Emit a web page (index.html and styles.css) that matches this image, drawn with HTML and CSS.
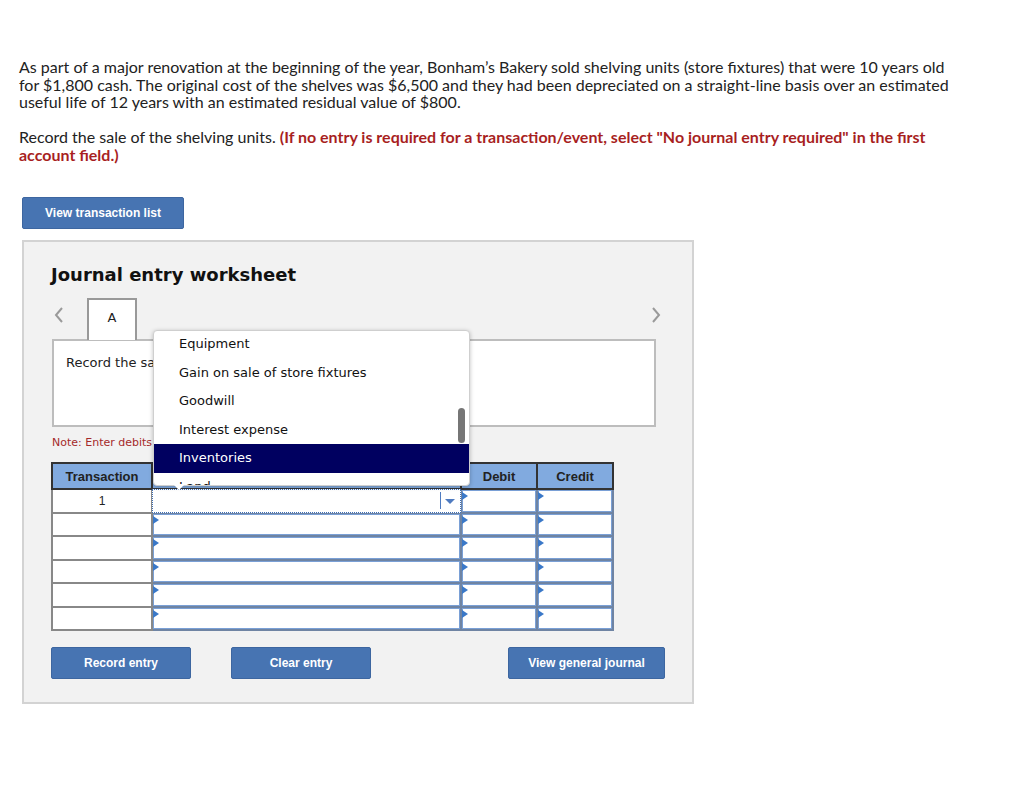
FILE: index.html
```html
<!DOCTYPE html>
<html lang="en">
<head>
    <meta charset="UTF-8">
    <title>Journal entry worksheet</title>
    <link rel="stylesheet" href="styles.css">
</head>
<body>
    <div class="pregunta">
        <p>As part of a major renovation at the beginning of the year, Bonham’s Bakery sold shelving units (store fixtures) that were 10 years old for $1,800 cash. The original cost of the shelves was $6,500 and they had been depreciated on a straight-line basis over an estimated useful life of 12 years with an estimated residual value of $800.</p>
        <p>Record the sale of the shelving units. <b class="aviso">(If no entry is required for a transaction/event, select "No journal entry required" in the first account field.)</b></p>
    </div>
    <button class="boton boton-lista">View transaction list</button>

    <div class="hoja">
        <h2 class="hoja-titulo">Journal entry worksheet</h2>
        <div class="tabs">
            <svg class="flecha" width="10" height="16" viewBox="0 0 10 16"><polyline points="8,1 2,8 8,15" fill="none" stroke="#9a9a9a" stroke-width="2"/></svg>
            <div class="tab">A</div>
            <svg class="flecha flecha-der" width="10" height="16" viewBox="0 0 10 16"><polyline points="2,1 8,8 2,15" fill="none" stroke="#9a9a9a" stroke-width="2"/></svg>
        </div>
        <div class="descripcion">Record the sale of the shelving units.</div>
        <div class="nota">Note: Enter debits before credits.</div>

        <table class="diario">
            <colgroup>
                <col class="col-trans">
                <col class="col-cuenta">
                <col class="col-monto">
                <col class="col-monto">
            </colgroup>
            <thead>
                <tr>
                    <th>Transaction</th>
                    <th>General Journal</th>
                    <th>Debit</th>
                    <th>Credit</th>
                </tr>
            </thead>
            <tbody>
                <tr>
                    <td class="trans">1</td>
                    <td class="celda"><div class="campo activo"><span class="sep"></span><span class="abajo"></span></div></td>
                    <td class="celda"><div class="campo"></div></td>
                    <td class="celda"><div class="campo"></div></td>
                </tr>
                <tr>
                    <td class="trans"></td>
                    <td class="celda"><div class="campo"></div></td>
                    <td class="celda"><div class="campo"></div></td>
                    <td class="celda"><div class="campo"></div></td>
                </tr>
                <tr>
                    <td class="trans"></td>
                    <td class="celda"><div class="campo"></div></td>
                    <td class="celda"><div class="campo"></div></td>
                    <td class="celda"><div class="campo"></div></td>
                </tr>
                <tr>
                    <td class="trans"></td>
                    <td class="celda"><div class="campo"></div></td>
                    <td class="celda"><div class="campo"></div></td>
                    <td class="celda"><div class="campo"></div></td>
                </tr>
                <tr>
                    <td class="trans"></td>
                    <td class="celda"><div class="campo"></div></td>
                    <td class="celda"><div class="campo"></div></td>
                    <td class="celda"><div class="campo"></div></td>
                </tr>
                <tr>
                    <td class="trans"></td>
                    <td class="celda"><div class="campo"></div></td>
                    <td class="celda"><div class="campo"></div></td>
                    <td class="celda"><div class="campo"></div></td>
                </tr>
            </tbody>
        </table>

        <div class="acciones">
            <button class="boton boton-accion">Record entry</button>
            <button class="boton boton-accion">Clear entry</button>
            <button class="boton boton-accion boton-diario">View general journal</button>
        </div>

        <!-- lista desplegable abierta -->
        <div class="lista">
            <div class="opciones">
                <div class="opcion">Equipment</div>
                <div class="opcion">Gain on sale of store fixtures</div>
                <div class="opcion">Goodwill</div>
                <div class="opcion">Interest expense</div>
                <div class="opcion elegida">Inventories</div>
                <div class="opcion">Land</div>
            </div>
            <span class="barra"></span>
            <span class="pico"></span>
        </div>
    </div>
</body>
</html>
```

FILE: styles.css
```css
body {
    margin: 0;
    background: #fff;
    color: #222;
    font-family: Lato, "Open Sans", Arial, sans-serif;
}
.pregunta {
    width: 940px;
    padding: 58px 0 0 19px;
    font-size: 16px;
    line-height: 17.5px;
}
.pregunta p {
    margin: 0 0 17.5px 0;
}
.aviso {
    color: #a81f1f;
}
.boton {
    background: #4774b2;
    color: #fff;
    border: 1px solid #3d66a0;
    border-radius: 2px;
    font-family: "Liberation Sans", Arial, sans-serif;
    font-weight: bold;
    font-size: 12px;
    cursor: pointer;
}
.boton-lista {
    display: block;
    margin: 34px 0 0 22px;
    width: 162px;
    height: 32px;
}
.hoja {
    position: relative;
    width: 668px;
    margin: 11px 0 0 22px;
    background: #f2f2f2;
    border: 2px solid #d3d3d3;
    padding: 0 0 23px 0;
    font-family: "DejaVu Sans", Verdana, sans-serif;
}
.hoja-titulo {
    margin: 0;
    padding: 21px 0 0 27px;
    font-size: 18px;
    line-height: 24px;
    color: #111;
}
.tabs {
    display: flex;
    align-items: flex-end;
    margin: 11px 0 0 28px;
    width: 612px;
    height: 41px;
}
.flecha {
    align-self: flex-start;
    margin: 9px 23px 0 2px;
}
.flecha-der {
    margin: 9px 3px 0 auto;
}
.tab {
    width: 50px;
    height: 42px;
    box-sizing: border-box;
    background: #fff;
    border: 2px solid #999;
    border-bottom: none;
    text-align: center;
    font-size: 13px;
    line-height: 36px;
    position: relative;
    top: 1px;
}
.descripcion {
    margin: 0 0 0 28px;
    width: 604px;
    height: 88px;
    box-sizing: border-box;
    background: #fff;
    border: 2px solid #bdbdbd;
    padding: 14px 12px;
    font-size: 13px;
    color: #222;
}
.nota {
    margin: 9px 0 0 28px;
    font-size: 11px;
    color: #a52a2a;
}
.diario {
    margin: 13px 0 0 27px;
    border-collapse: collapse;
    table-layout: fixed;
    width: 560px;
    font-family: "Liberation Sans", Arial, sans-serif;
}
.col-trans { width: 100px; }
.col-cuenta { width: 309px; }
.col-monto { width: 76px; }
.diario th {
    background: #81aadf;
    border: 2px solid #333;
    height: 24px;
    padding: 0;
    font-size: 13px;
    color: #222;
}
.diario td {
    border: 2px solid #888;
    padding: 0;
    height: 21.5px;
}
.trans {
    background: #fff;
    text-align: center;
    font-size: 12px;
    color: #222;
}
.diario td.celda {
    border-color: #6f84a3;
    background: #6f84a3;
}
.campo {
    position: relative;
    height: 19.5px;
    background: #fff;
    border: 1px solid #7aa0d6;
}
.campo::before {
    content: "";
    position: absolute;
    left: -1px;
    top: 1px;
    border-left: 6px solid #3a78c8;
    border-top: 4px solid transparent;
    border-bottom: 4px solid transparent;
}
.campo.activo {
    border: 1px dotted #3f6fb5;
    margin: -1px;
    height: 21.5px;
}
.campo.activo::before {
    display: none;
}
.sep {
    position: absolute;
    right: 19px;
    top: 2px;
    height: 17px;
    border-left: 1px solid #4f7bc0;
}
.abajo {
    position: absolute;
    right: 5px;
    top: 9px;
    border-top: 5px solid #4f7bc0;
    border-left: 5px solid transparent;
    border-right: 5px solid transparent;
}
.acciones {
    display: flex;
    gap: 40px;
    margin: 16px 0 0 27px;
    width: 614px;
}
.boton-accion {
    width: 140px;
    height: 32px;
}
.boton-diario {
    margin-left: auto;
    width: 157px;
}
.lista {
    position: absolute;
    left: 129px;
    top: 88px;
    width: 315px;
    height: 154px;
    background: #fff;
    border: 1px solid #cfcfcf;
    border-radius: 4px;
    box-shadow: 0 1px 4px rgba(0,0,0,0.25);
    font-size: 13px;
    color: #111;
}
.opciones {
    height: 154px;
    overflow: hidden;
    border-radius: 4px;
}
.opcion {
    height: 28.5px;
    line-height: 28px;
    padding-left: 25px;
}
.opcion:first-child {
    margin-top: -1px;
}
.elegida {
    background: #000060;
    color: #fff;
}
.barra {
    position: absolute;
    right: 4px;
    top: 77px;
    width: 7px;
    height: 35px;
    background: #767676;
    border-radius: 4px;
}
.pico {
    position: absolute;
    left: 19px;
    top: 153px;
    border-top: 6px solid #fff;
    border-left: 6px solid transparent;
    border-right: 6px solid transparent;
}
```
